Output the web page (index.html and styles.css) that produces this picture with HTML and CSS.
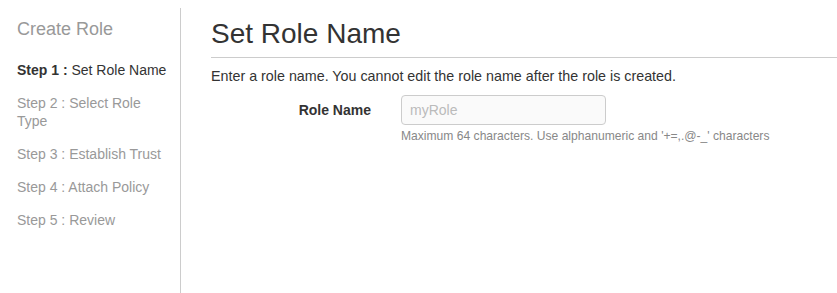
FILE: index.html
```html
<!DOCTYPE html>
<html>
<head>
    <title>Create Role</title>
    <link rel="stylesheet" href="styles.css">
</head>
<body>
    <div class="wizard">
        <div class="sidebar">
            <div class="sidebar-title">Create Role</div>
            <ul class="steps">
                <li class="step active"><b>Step 1 :</b> Set Role Name</li>
                <li class="step">Step 2 : Select Role Type</li>
                <li class="step">Step 3 : Establish Trust</li>
                <li class="step">Step 4 : Attach Policy</li>
                <li class="step">Step 5 : Review</li>
            </ul>
        </div>
        <div class="content">
            <h1 class="page-title">Set Role Name</h1>
            <p class="intro">Enter a role name. You cannot edit the role name after the role is created.</p>
            <div class="form-row">
                <label class="form-label" for="roleName">Role Name</label>
                <div class="form-field">
                    <input class="text-input" id="roleName" type="text" placeholder="myRole">
                    <div class="help">Maximum 64 characters. Use alphanumeric and '+=,.@-_' characters</div>
                </div>
            </div>
        </div>
    </div>
</body>
</html>
```

FILE: styles.css
```css
body {
    margin: 0;
    background-color: white;
    font-family: "Liberation Sans", Arial, sans-serif;
    font-size: 14px;
    color: #333;
    overflow: hidden;
}

.wizard {
    display: flex;
    height: 293px;
}

.sidebar {
    width: 163px;
    flex-shrink: 0;
    padding: 16px 0 0 17px;
    margin-top: 8px;
    border-right: 1px solid #ccc;
    box-sizing: content-box;
}

.sidebar-title {
    font-size: 18px;
    color: #999;
    line-height: 24px;
    margin-top: -7px;
}

.steps {
    list-style: none;
    margin: 20px 0 0 0;
    padding: 0;
}

.step {
    color: #999;
    line-height: 18px;
    margin-bottom: 15px;
    padding-right: 8px;
}

.step.active {
    color: #333;
}

.content {
    flex: 1;
    padding: 0 0 0 30px;
}

.page-title {
    font-size: 28px;
    font-weight: normal;
    color: #333;
    margin: 18px 0 0 0;
    line-height: 32px;
    padding-bottom: 7px;
    border-bottom: 1px solid #ccc;
}

.intro {
    margin: 9px 0 0 0;
    line-height: 18px;
    font-size: 14.3px;
}

.form-row {
    display: flex;
    margin-top: 10px;
}

.form-label {
    width: 160px;
    text-align: right;
    font-weight: bold;
    padding-top: 6px;
    padding-right: 30px;
    line-height: 18px;
}

.form-field {
    display: flex;
    flex-direction: column;
}

.text-input {
    width: 205px;
    height: 30px;
    box-sizing: border-box;
    border: 1px solid #ccc;
    border-radius: 4px;
    background-color: #fafafa;
    padding: 4px 8px;
    font-family: inherit;
    font-size: 14px;
    color: #333;
}

.text-input::placeholder {
    color: #bbb;
}

.help {
    font-size: 12.1px;
    color: #888;
    margin-top: 3px;
    line-height: 16px;
}
```
